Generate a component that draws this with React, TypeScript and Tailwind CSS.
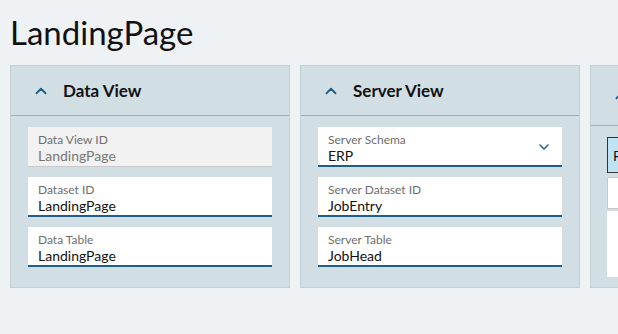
import { ChevronUp, ChevronDown } from "lucide-react";

type Field = { label: string; value: string; disabled?: boolean; select?: boolean };

function FieldBox({ label, value, disabled, select }: Field) {
  return (
    <div
      className={`relative flex h-[40px] flex-col px-[10px] pt-[5px] ${
        disabled ? "border-b border-[#c9c9c9] bg-[#f2f2f2]" : "border-b-2 border-[#1d5f8a] bg-white"
      }`}
    >
      <div className="text-[12px] leading-[15px] text-[#6e6e6e]">{label}</div>
      <div className={`text-[14px] leading-[18px] ${disabled ? "text-[#777]" : "text-[#111]"}`}>{value}</div>
      {select && (
        <ChevronDown className="absolute right-[10px] top-[12px] h-4 w-4 text-[#1d5f8a]" strokeWidth={2.2} />
      )}
    </div>
  );
}

function Panel({ title, fields }: { title: string; fields: Field[] }) {
  return (
    <div className="w-[280px] shrink-0 border border-[#c2cfd4] bg-[#d1dee3]">
      <div className="flex h-[50px] items-center border-b border-[#8fb5c3] pl-[21px]">
        <ChevronUp className="h-[18px] w-[18px] text-[#1d5f8a]" strokeWidth={2.4} />
        <span className="ml-[13px] text-[17px] font-bold text-[#111]">{title}</span>
      </div>
      <div className="flex flex-col gap-[10px] px-[17px] pb-[20px] pt-[11px]">
        {fields.map((f) => (
          <FieldBox key={f.label} {...f} />
        ))}
      </div>
    </div>
  );
}

export default function App() {
  return (
    <div
      className="h-[334px] w-[618px] overflow-hidden bg-[#eef2f5] px-[10px] pt-[10px]"
      style={{ fontFamily: "Lato, 'Open Sans', sans-serif" }}
    >
      <h1 className="h-[55px] pt-[2px] text-[33px] leading-[40px] text-[#111]">LandingPage</h1>
      <div className="flex items-start gap-[10px]">
        <Panel
          title="Data View"
          fields={[
            { label: "Data View ID", value: "LandingPage", disabled: true },
            { label: "Dataset ID", value: "LandingPage" },
            { label: "Data Table", value: "LandingPage" },
          ]}
        />
        <Panel
          title="Server View"
          fields={[
            { label: "Server Schema", value: "ERP", select: true },
            { label: "Server Dataset ID", value: "JobEntry" },
            { label: "Server Table", value: "JobHead" },
          ]}
        />
        <div className="h-[223px] w-[280px] shrink-0 overflow-hidden border border-[#c2cfd4] bg-[#d1dee3]">
          <div className="flex h-[60px] items-center border-b border-[#8fb5c3] pl-[21px]">
            <ChevronUp className="h-[18px] w-[18px] text-[#1d5f8a]" strokeWidth={2.4} />
            <span className="ml-[13px] text-[17px] font-bold text-[#111]">Fields</span>
          </div>
          <div className="px-[16px] pt-[11px]">
            <div className="flex h-[36px] items-center border border-[#333] bg-[#bde3f5] px-[5px] text-[14px] text-[#111]">
              Field
            </div>
            <div className="mt-[4px] h-[32px] border border-[#c9c9c9] bg-white" />
            <div className="mt-[2px] h-[66px] bg-white" />
          </div>
        </div>
      </div>
    </div>
  );
}
